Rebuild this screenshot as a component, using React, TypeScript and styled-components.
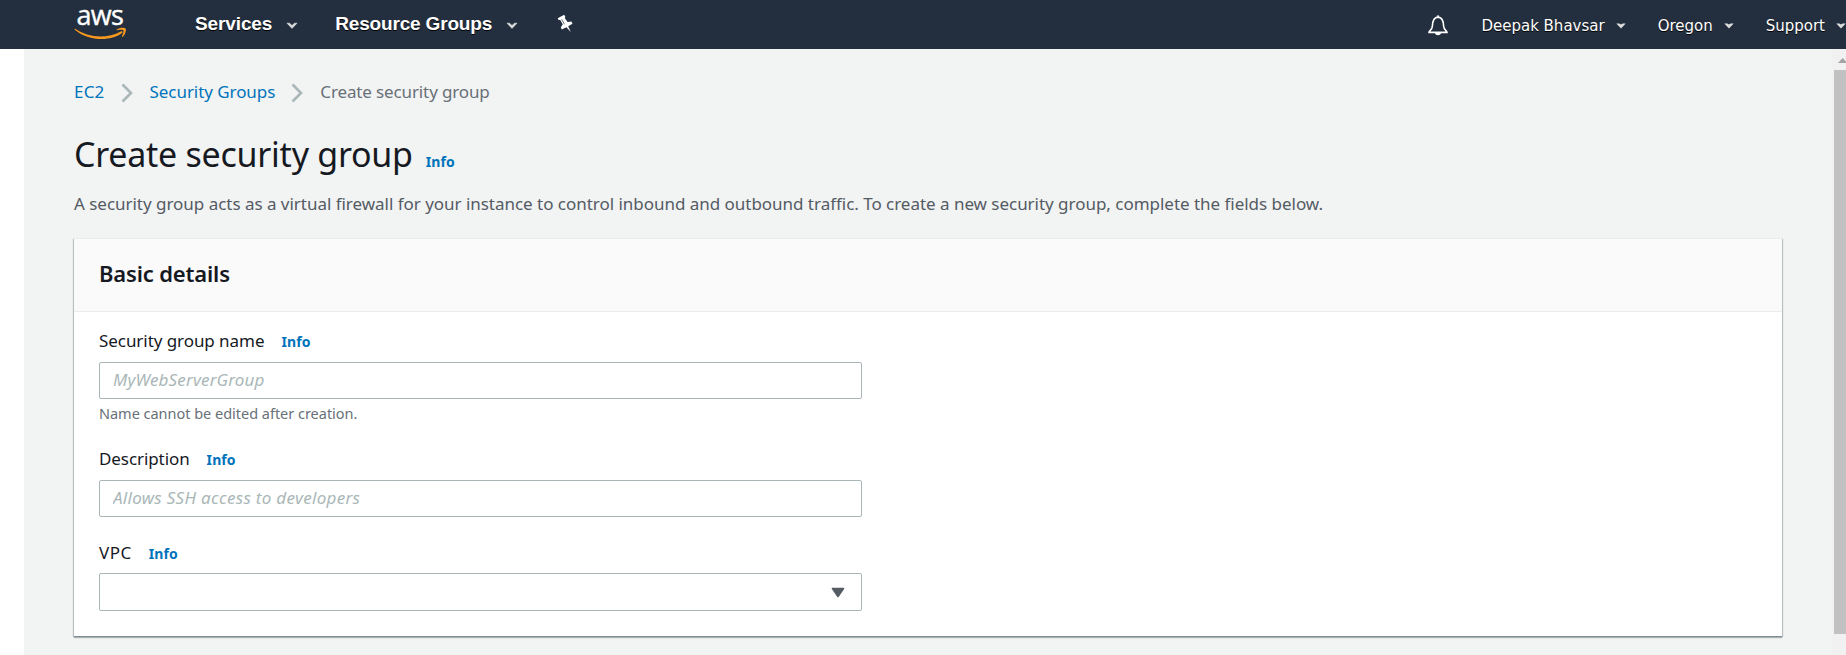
import React from 'react';
import styled, { createGlobalStyle } from 'styled-components';

const GlobalStyle = createGlobalStyle`
  * { box-sizing: border-box; }
  body {
    margin: 0;
    overflow: hidden;
    background: #fff;
    font-family: 'Noto Sans', 'Open Sans', sans-serif;
    font-size: 17px;
    color: #16191f;
  }
`;

const Page = styled.div`
  display: flex;
  flex-direction: column;
  width: 100%;
  height: 100vh;
  overflow: hidden;
`;

const TopBar = styled.header`
  flex: none;
  display: flex;
  align-items: flex-start;
  height: 49px;
  padding-left: 74px;
  background: #232f3e;
  color: #fff;
  text-shadow: 0 1px 0 #000;
  white-space: nowrap;
`;

const Logo = styled.div`
  flex: none;
  display: flex;
  flex-direction: column;
  width: 56px;
  height: 46px;
  margin-right: 65px;
`;

const LogoText = styled.span`
  height: 27px;
  padding-left: 2.4px;
  font-family: 'Open Sans', sans-serif;
  font-size: 27px;
  font-weight: 500;
  line-height: 29px;
  letter-spacing: -0.6px;
  text-shadow: none;
  -webkit-text-stroke: 0.4px #fff;
`;

const Smile = styled.svg`
  width: 56px;
  height: 14px;
`;

const NavItem = styled.div<{ $gap: number; $spacing: number }>`
  display: flex;
  align-items: center;
  height: 47px;
  margin-right: ${(p) => p.$gap}px;
  font: bold 19px 'Liberation Sans', Arial, sans-serif;
  letter-spacing: ${(p) => p.$spacing}px;
`;

const NavChevron = styled.svg`
  width: 12px;
  height: 8px;
  margin: 5px 0 0 14px;
`;

const PinIcon = styled.svg`
  width: 17px;
  height: 19px;
  margin-top: 14px;
`;

const Account = styled.nav`
  display: flex;
  align-items: center;
  height: 49px;
  padding-top: 3px;
  margin-left: auto;
  font: 15px 'DejaVu Sans', Verdana, sans-serif;
`;

const BellIcon = styled.svg`
  width: 22px;
  height: 22px;
  margin: 0 32px 2px 0;
`;

const AccountItem = styled.div<{ $gap: number }>`
  display: flex;
  align-items: center;
  margin-right: ${(p) => p.$gap}px;
`;

const Caret = styled.svg`
  width: 10px;
  height: 6px;
  margin: 0 0 1px 11px;
`;

const Workspace = styled.div`
  flex: 1;
  display: flex;
  min-height: 0;
  margin-left: 24px;
  background: #f2f3f3;
`;

const Content = styled.main`
  flex: 1;
  min-width: 0;
  padding: 31px 50px 0;
`;

const Breadcrumbs = styled.nav`
  display: flex;
  align-items: center;
  height: 24px;
`;

const Crumb = styled.a<{ $current?: boolean; $spacing?: number }>`
  color: ${(p) => (p.$current ? '#687078' : '#0073bb')};
  letter-spacing: ${(p) => p.$spacing ?? 0}px;
  line-height: 24px;
`;

const CrumbArrow = styled.svg`
  width: 12px;
  height: 20px;
  margin: 2px 17px 0 16px;
`;

const TitleRow = styled.div`
  display: flex;
  align-items: baseline;
  height: 42px;
  margin-top: 29px;
`;

const Title = styled.h1`
  margin: 0 13px 0 0;
  font-size: 34px;
  font-weight: 400;
  line-height: 42px;
  letter-spacing: -0.26px;
`;

const Info = styled.a`
  color: #0073bb;
  font-size: 14px;
  font-weight: 700;
  letter-spacing: 0.1px;
`;

const Intro = styled.p`
  margin: 17px 0 0;
  color: #545b64;
  line-height: 24px;
  letter-spacing: -0.027px;
  white-space: nowrap;
`;

const Card = styled.section`
  margin-top: 22px;
  background: #fff;
  box-shadow:
    0 1px 0 #7f8e93,
    0 2px 1px rgba(0, 28, 36, 0.25),
    1px 1px 1px rgba(0, 28, 36, 0.2),
    -1px 1px 1px rgba(0, 28, 36, 0.2);
`;

const CardHeader = styled.header`
  height: 74px;
  padding: 19px 25px;
  background: #fafafa;
  border-top: 1px solid #eaeded;
  border-bottom: 1px solid #eaeded;
`;

const CardTitle = styled.h2`
  margin: 0;
  font-size: 22px;
  font-weight: 600;
  line-height: 30px;
  letter-spacing: -0.16px;
`;

const CardBody = styled.div`
  display: flex;
  flex-direction: column;
  gap: 24px;
  width: 813px;
  padding: 17px 25px 25px;
`;

const Field = styled.div`
  display: flex;
  flex-direction: column;
`;

const LabelRow = styled.div<{ $gap?: number }>`
  display: flex;
  align-items: baseline;
  gap: 17px;
  height: 24px;
  margin-bottom: ${(p) => p.$gap ?? 9}px;
  line-height: 24px;
`;

const Label = styled.label<{ $spacing: number }>`
  letter-spacing: ${(p) => p.$spacing}px;
`;

const Input = styled.input<{ $spacing: number }>`
  width: 100%;
  height: 37px;
  padding: 0 13px 2px;
  border: 1px solid #aab7b8;
  border-radius: 2px;
  background: #fff;
  font: 17px 'Noto Sans', 'Open Sans', sans-serif;
  &::placeholder {
    color: #aab7b8;
    font-style: italic;
    letter-spacing: ${(p) => p.$spacing}px;
    opacity: 1;
  }
`;

const Select = styled.div`
  display: flex;
  align-items: center;
  justify-content: flex-end;
  height: 38px;
  padding-right: 16px;
  border: 1px solid #aab7b8;
  border-radius: 2px;
`;

const SelectArrow = styled.svg`
  width: 14px;
  height: 11px;
`;

const Hint = styled.div`
  margin-top: 4px;
  color: #687078;
  font-size: 14.5px;
  line-height: 20px;
  letter-spacing: -0.02px;
`;

const Scrollbar = styled.div`
  flex: none;
  display: flex;
  flex-direction: column;
  align-items: flex-end;
  width: 14px;
  background: #f1f1f1;
`;

const ScrollUp = styled.svg`
  flex: none;
  width: 8px;
  height: 5px;
  margin: 9px 0 7px;
`;

const ScrollThumb = styled.div`
  width: 12px;
  height: 564px;
  background: #c1c1c1;
`;

function Chevron() {
  return (
    <NavChevron viewBox="0 0 12 8">
      <path d="M1 1.2 H3.6 L6 3.6 L8.4 1.2 H11 L6 6.4 Z" fill="#ddd" stroke="#ddd" strokeWidth=".6" />
    </NavChevron>
  );
}

function DownCaret() {
  return (
    <Caret viewBox="0 0 10 6">
      <path d="M.3 .4 H3.4 L5 1.4 L6.6 .4 H9.7 L5 5.4 Z" fill="#ddd" />
    </Caret>
  );
}

function Separator() {
  return (
    <CrumbArrow viewBox="0 0 12 20">
      <path d="M1.5 1.5 L10 10 L1.5 18.5" fill="none" stroke="#aab7b8" strokeWidth="2.6" />
    </CrumbArrow>
  );
}

export default function App() {
  return (
    <Page>
      <GlobalStyle />
      <TopBar>
        <Logo>
          <LogoText>aws</LogoText>
          <Smile viewBox="0 27 56 14" fill="#f7981f">
            <path d="M1.2 28.8 C14 37.8 33 39 46.8 31.4 C48.3 30.7 49.2 32 48 33 C36 42 14 40.8 1 29.9 C.4 29.2 .7 28.5 1.2 28.8 Z" />
            <path d="M42.8 29.4 C45.2 27.5 50.2 27.3 51.6 28.4 C52.6 30 51.2 34.8 48.6 36.8 C48 37.2 47.7 36.8 48 36.3 C48.8 34.2 50.1 31.2 49.3 30.3 C48.6 29.5 45.3 29.8 43.3 30.2 C42.7 30.3 42.3 29.8 42.8 29.4 Z" />
          </Smile>
        </Logo>
        <NavItem $gap={37} $spacing={-0.12}>
          Services
          <Chevron />
        </NavItem>
        <NavItem $gap={39} $spacing={-0.17}>
          Resource Groups
          <Chevron />
        </NavItem>
        <PinIcon viewBox="0 0 17 19">
          <path
            d="M.7 4.2 L7.2 .8 L8.4 3 L7.7 3.9 L10.6 8 L14.4 7.6 L15.5 9.8 L11.2 12.2 L13.8 18 L9.4 13.2 L4.8 15.5 L3.8 13.3 L5.8 10.2 L3.2 5.9 L1.6 6.1 Z"
            fill="#fff"
          />
          <path d="M4.6 5.3 L7.6 10.4" stroke="#5c6671" strokeWidth=".9" />
        </PinIcon>
        <Account>
          <BellIcon viewBox="0 0 22 22" fill="none" stroke="#fff" strokeWidth="1.6">
            <path d="M2 18.4 H20 C20 16.6 16.9 16.5 16.6 12 C16.4 7 15.4 3.2 11 3.1 C6.6 3.2 5.6 7 5.4 12 C5.1 16.5 2 16.6 2 18.4 Z" />
            <path d="M9.8 2.8 V1.5 H12.2 V2.8 Z" fill="#fff" stroke="none" />
            <path d="M8 19 H14 C13.6 22 8.4 22 8 19 Z" fill="#fff" stroke="none" />
          </BellIcon>
          <AccountItem $gap={32}>
            Deepak Bhavsar
            <DownCaret />
          </AccountItem>
          <AccountItem $gap={32}>
            Oregon
            <DownCaret />
          </AccountItem>
          <AccountItem $gap={0}>
            Support
            <DownCaret />
          </AccountItem>
        </Account>
      </TopBar>
      <Workspace>
        <Content>
          <Breadcrumbs>
            <Crumb $spacing={0.2}>EC2</Crumb>
            <Separator />
            <Crumb $spacing={-0.06}>Security Groups</Crumb>
            <Separator />
            <Crumb $current $spacing={-0.13}>Create security group</Crumb>
          </Breadcrumbs>
          <TitleRow>
            <Title>Create security group</Title>
            <Info>Info</Info>
          </TitleRow>
          <Intro>
            A security group acts as a virtual firewall for your instance to control inbound and outbound
            traffic. To create a new security group, complete the fields below.
          </Intro>
          <Card>
            <CardHeader>
              <CardTitle>Basic details</CardTitle>
            </CardHeader>
            <CardBody>
              <Field>
                <LabelRow>
                  <Label $spacing={-0.06}>Security group name</Label>
                  <Info>Info</Info>
                </LabelRow>
                <Input $spacing={0.16} placeholder="MyWebServerGroup" />
                <Hint>Name cannot be edited after creation.</Hint>
              </Field>
              <Field>
                <LabelRow>
                  <Label $spacing={-0.08}>Description</Label>
                  <Info>Info</Info>
                </LabelRow>
                <Input $spacing={0.3} placeholder="Allows SSH access to developers" />
              </Field>
              <Field>
                <LabelRow $gap={8}>
                  <Label $spacing={0.5}>VPC</Label>
                  <Info>Info</Info>
                </LabelRow>
                <Select>
                  <SelectArrow viewBox="0 0 14 11">
                    <path d="M1.5 1.5 H12.5 L7 9.5 Z" fill="#545b64" stroke="#545b64" strokeWidth="1.6" strokeLinejoin="round" />
                  </SelectArrow>
                </Select>
              </Field>
            </CardBody>
          </Card>
        </Content>
        <Scrollbar>
          <ScrollUp viewBox="0 0 8 5">
            <path d="M0 5 L4.7 0 L8 3.5 V5 Z" fill="#a3a3a3" />
          </ScrollUp>
          <ScrollThumb />
        </Scrollbar>
      </Workspace>
    </Page>
  );
}
